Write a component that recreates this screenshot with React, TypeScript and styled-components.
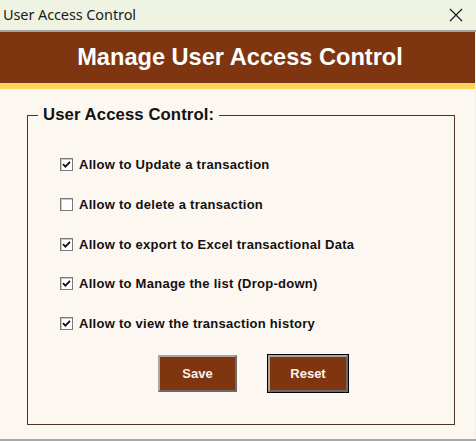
import React, { useState } from 'react';
import styled, { createGlobalStyle } from 'styled-components';

const GlobalStyle = createGlobalStyle`
	html, body {
		margin: 0;
		padding: 0;
		background: #fdf7f2;
	}
	* {
		box-sizing: border-box;
	}
`;

const permissions = [
	{ label: 'Allow to Update a transaction', checked: true },
	{ label: 'Allow to delete a transaction', checked: false },
	{ label: 'Allow to export to Excel transactional Data', checked: true },
	{ label: 'Allow to Manage the list (Drop-down)', checked: true },
	{ label: 'Allow to view the transaction history', checked: true },
];

export default function App() {
	const [items, setItems] = useState(permissions);

	const toggle = (index: number) =>
		setItems(prev => prev.map((item, i) => (i === index ? { ...item, checked: !item.checked } : item)));

	const reset = () => setItems(prev => prev.map(item => ({ ...item, checked: false })));

	return (
		<Window>
			<GlobalStyle />
			<TitleBar>
				<TitleText>User Access Control</TitleText>
				<CloseButton aria-label="Close">
					<svg width="16" height="16" viewBox="0 0 16 16">
						<path d="M2 2 L14 14 M14 2 L2 14" stroke="#1a1a1a" strokeWidth="1.2" fill="none" />
					</svg>
				</CloseButton>
			</TitleBar>
			<Body>
				<Header>Manage User Access Control</Header>
				<Content>
					<Group>
						<Legend>User Access Control:</Legend>
						<List>
							{items.map((item, i) => (
								<Row key={item.label} onClick={() => toggle(i)}>
									<CheckBox>
										{item.checked && (
											<svg width="9" height="9" viewBox="0 0 9 9">
												<path d="M1 4.2 L3.4 6.6 L8 1.8" stroke="#111" strokeWidth="1.8" fill="none" />
											</svg>
										)}
									</CheckBox>
									<Label>{item.label}</Label>
								</Row>
							))}
						</List>
						<Buttons>
							<ActionButton>Save</ActionButton>
							<ActionButton $focused onClick={reset}>Reset</ActionButton>
						</Buttons>
					</Group>
				</Content>
			</Body>
		</Window>
	);
}

const Window = styled.div`
	width: 476px;
	height: 441px;
	display: flex;
	flex-direction: column;
	background: #fdf7f2;
	border-bottom: 2px solid #a8a8a8;
	overflow: hidden;
`;

const TitleBar = styled.div`
	height: 32px;
	flex-shrink: 0;
	display: flex;
	align-items: center;
	justify-content: space-between;
	padding: 0 12px 2px 3px;
	background: #eff4e2;
	border-bottom: 2px solid #a3a3a3;
`;

const TitleText = styled.span`
	font-family: 'Noto Sans', 'Open Sans', sans-serif;
	font-size: 14.5px;
	color: #1a1a1a;
	letter-spacing: -0.1px;
`;

const CloseButton = styled.button`
	border: none;
	background: transparent;
	padding: 0;
	display: flex;
	align-items: center;
	justify-content: center;
	margin-top: 2px;
`;

const Body = styled.div`
	flex: 1;
	display: flex;
	flex-direction: column;
	border-right: 1px solid #f3efe9;
`;

const Header = styled.div`
	height: 57px;
	flex-shrink: 0;
	display: flex;
	align-items: center;
	justify-content: center;
	padding-left: 5px;
	background: #7e3510;
	border-bottom: 6px solid #fdd35c;
	color: #ffffff;
	font-family: 'Liberation Sans', Arial, sans-serif;
	font-weight: bold;
	font-size: 23.6px;
`;

const Content = styled.div`
	flex: 1;
	padding: 16px 20px 14px 27px;
	display: flex;
`;

const Group = styled.fieldset`
	flex: 1;
	margin: 0;
	padding: 0;
	border: 1px solid #4e3325;
	display: flex;
	flex-direction: column;
`;

const Legend = styled.legend`
	margin-left: 10px;
	padding: 0 5px;
	font-family: 'Liberation Sans', Arial, sans-serif;
	font-weight: bold;
	font-size: 16.7px;
	color: #111;
	letter-spacing: 0.1px;
`;

const List = styled.div`
	display: flex;
	flex-direction: column;
	gap: 26.8px;
	margin-top: 33px;
	padding-left: 32px;
`;

const Row = styled.label`
	display: flex;
	align-items: center;
	gap: 6px;
	height: 13px;
	cursor: default;
`;

const CheckBox = styled.span`
	width: 13px;
	height: 13px;
	flex-shrink: 0;
	display: flex;
	align-items: center;
	justify-content: center;
	background: #ffffff;
	border: 1px solid #7a7a7a;
	box-shadow: inset 1px 1px 0 #c8c8c8;
`;

const Label = styled.span`
	font-family: 'Liberation Sans', Arial, sans-serif;
	font-weight: bold;
	font-size: 13px;
	color: #111;
	letter-spacing: 0.27px;
`;

const Buttons = styled.div`
	display: flex;
	gap: 31px;
	margin-top: 25px;
	padding-left: 130px;
`;

const ActionButton = styled.button<{ $focused?: boolean }>`
	width: ${p => (p.$focused ? '80px' : '79px')};
	height: 37px;
	background: #7e3510;
	color: #fdf3ea;
	font-family: 'Liberation Sans', Arial, sans-serif;
	font-weight: bold;
	font-size: 13px;
	border: 2px solid;
	border-color: #b0a49a #6e6a66 #6e6a66 #b0a49a;
	outline: ${p => (p.$focused ? '1px solid #000' : 'none')};
	outline-offset: 0;
	padding: 0;
`;
